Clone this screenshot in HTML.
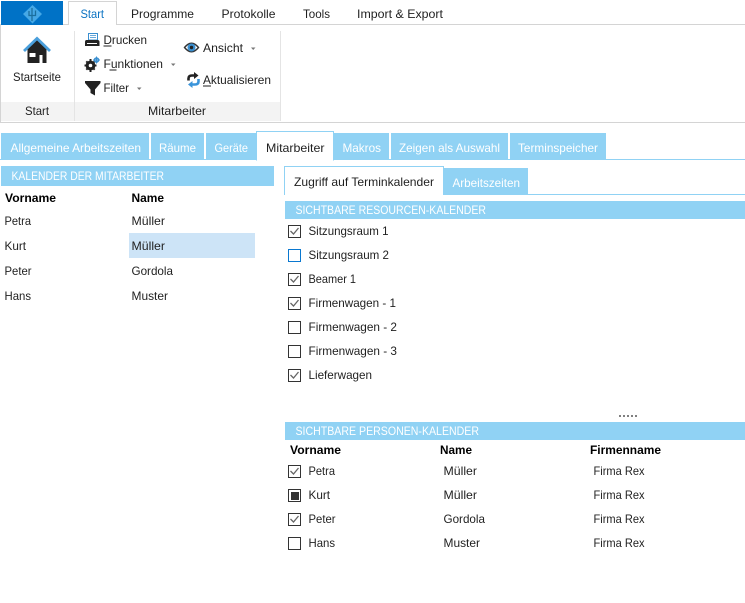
<!DOCTYPE html>
<html lang="de">
<head>
<meta charset="utf-8">
<title>Mitarbeiter</title>
<style>
html,body{margin:0;padding:0;background:#fff;width:745px;height:603px;overflow:hidden}
svg{display:block}
text{font-family:"Liberation Sans",sans-serif;font-size:12px;fill:#1f1f1f}
.b{font-weight:bold;fill:#000}
.w{fill:#fff}
.lb{fill:#90d2f4}
.cb{fill:#fff;stroke:#333;stroke-width:1}
.ck{fill:none;stroke:#666;stroke-width:1.3}
</style>
</head>
<body>
<svg width="745" height="603" viewBox="0 0 745 603" xmlns="http://www.w3.org/2000/svg">
<!-- Ribbon top -->
<rect x="0" y="24" width="745" height="1" fill="#d4d4d4"/>
<rect x="1" y="1" width="62" height="24" fill="#0072c6"/>
<path d="M32.500 5 L42 14 L32.500 23.500 L23 14Z" fill="#45a8e6"/>
<path d="M32 8V21M29 11V15.500H35.500V10.500" fill="none" stroke="#1b6f9e" stroke-width="1.300"/>
<path d="M68.500 25V1.500H116.500V25" fill="#fff" stroke="#d4d4d4"/>
<text lengthAdjust="spacingAndGlyphs" x="80.500" y="18" textLength="23.500" style="fill:#0a72c2">Start</text>
<text lengthAdjust="spacingAndGlyphs" x="131" y="18" textLength="63">Programme</text>
<text lengthAdjust="spacingAndGlyphs" x="221.500" y="18" textLength="54">Protokolle</text>
<text lengthAdjust="spacingAndGlyphs" x="303" y="18" textLength="27">Tools</text>
<text lengthAdjust="spacingAndGlyphs" x="357" y="18" textLength="86">Import &amp; Export</text>
<!-- Ribbon body -->
<rect x="0" y="25" width="1" height="98" fill="#d4d4d4"/>
<rect x="1" y="102" width="280" height="19" fill="#f3f3f3"/>
<rect x="74" y="31" width="1" height="90" fill="#e4e4e4"/>
<rect x="280" y="31" width="1" height="90" fill="#e4e4e4"/>
<rect x="0" y="122" width="745" height="1" fill="#d4d4d4"/>
<!-- House icon -->
<path d="M27.500 48V63H46.500V48L37 40Z" fill="#222"/>
<path d="M24 51L37 38.500L50 51" fill="none" stroke="#4a9fdc" stroke-width="2.800"/>
<rect x="29.500" y="53" width="6" height="4" fill="#fff"/>
<rect x="39.500" y="55" width="3" height="8" fill="#fff"/>
<text lengthAdjust="spacingAndGlyphs" x="13" y="81" textLength="48">Startseite</text>
<!-- Printer -->
<path d="M88.500 33.500H97.500V40H88.500Z" fill="#fff" stroke="#3a8fd0"/>
<path d="M90 35.500H96M90 37.500H96" stroke="#3a8fd0" stroke-width=".8"/>
<path d="M86.500 40H97.500Q99.500 40 99.500 42V46H85V42Q85 40 86.500 40Z" fill="#222"/>
<rect x="87" y="43" width="10" height="1" fill="#fff"/>
<text lengthAdjust="spacingAndGlyphs" x="103.500" y="44" textLength="43.500">Drucken</text>
<rect x="103.500" y="45.500" width="8" height="1" fill="#1f1f1f"/>
<!-- Gear -->
<circle cx="90.500" cy="65.500" r="3.500" fill="none" stroke="#222" stroke-width="2.800"/>
<path d="M90.500 59V72M84.500 65.500H96.500M86.300 61.300L94.700 69.700M94.700 61.300L86.300 69.700" stroke="#222" stroke-width="2"/>
<circle cx="90.500" cy="65.500" r="1.800" fill="#fff"/>
<circle cx="96.500" cy="60" r="2" fill="none" stroke="#3a8fd0" stroke-width="1.600"/>
<path d="M96.500 56.500V63.500M93 60H100" stroke="#3a8fd0" stroke-width="1"/>
<text lengthAdjust="spacingAndGlyphs" x="103.500" y="68" textLength="59.500">Funktionen</text>
<rect x="109.500" y="69.500" width="7" height="1" fill="#1f1f1f"/>
<path d="M171 63.500H175.500L173.200 66Z" fill="#777"/>
<!-- Funnel -->
<path d="M85 81H100.500V83L95 89.500V95.500L90.500 93V89.500L85 83Z" fill="#222"/>
<text lengthAdjust="spacingAndGlyphs" x="103.500" y="92" textLength="25.500">Filter</text>
<path d="M137 87.500H141.500L139.200 90Z" fill="#777"/>
<!-- Eye -->
<path d="M184.500 47.500Q191.500 39 198.500 47.500Q191.500 56 184.500 47.500Z" fill="#fff" stroke="#333" stroke-width="1.400"/>
<circle cx="191.500" cy="47.500" r="4" fill="#3a8fd0"/>
<circle cx="191.500" cy="47.500" r="1.700" fill="#222"/>
<text lengthAdjust="spacingAndGlyphs" x="203" y="52" textLength="40">Ansicht</text>
<path d="M251 47.500H255.500L253.200 50Z" fill="#777"/>
<!-- Refresh -->
<path d="M188.500 80.500V78.500Q188.500 75.500 192 75.500H195" fill="none" stroke="#222" stroke-width="2.600"/>
<path d="M194 72L198.500 75.500L194 79Z" fill="#222"/>
<path d="M198.500 79V81.500Q198.500 84.500 195 84.500H192" fill="none" stroke="#3a94da" stroke-width="2.600"/>
<path d="M192.500 81L188 84.500L192.500 88Z" fill="#3a94da"/>
<text lengthAdjust="spacingAndGlyphs" x="203" y="84" textLength="68">Aktualisieren</text>
<rect x="203" y="85.500" width="8" height="1" fill="#1f1f1f"/>
<text lengthAdjust="spacingAndGlyphs" x="25" y="115" textLength="24">Start</text>
<text lengthAdjust="spacingAndGlyphs" x="148" y="115" textLength="58">Mitarbeiter</text>
<!-- Main tabs -->
<rect x="0" y="159" width="745" height="1" class="lb"/>
<rect x="1" y="133" width="148" height="26" class="lb"/>
<rect x="151" y="133" width="53" height="26" class="lb"/>
<rect x="206" y="133" width="50" height="26" class="lb"/>
<path d="M256.500 160V131.500H333.500V160Z" fill="#fff" stroke="#90d2f4"/>
<rect x="257" y="159" width="76" height="2" fill="#fff"/>
<rect x="334" y="133" width="55" height="26" class="lb"/>
<rect x="391" y="133" width="117" height="26" class="lb"/>
<rect x="510" y="133" width="96" height="26" class="lb"/>
<text lengthAdjust="spacingAndGlyphs" class="w" x="10.500" y="152" textLength="130.500">Allgemeine Arbeitszeiten</text>
<text lengthAdjust="spacingAndGlyphs" class="w" x="159" y="152" textLength="37">Räume</text>
<text lengthAdjust="spacingAndGlyphs" class="w" x="214.500" y="152" textLength="33.500">Geräte</text>
<text lengthAdjust="spacingAndGlyphs" x="266" y="152" textLength="58.500">Mitarbeiter</text>
<text lengthAdjust="spacingAndGlyphs" class="w" x="342.500" y="152" textLength="38.500">Makros</text>
<text lengthAdjust="spacingAndGlyphs" class="w" x="399" y="152" textLength="101">Zeigen als Auswahl</text>
<text lengthAdjust="spacingAndGlyphs" class="w" x="518" y="152" textLength="80">Terminspeicher</text>
<!-- Left pane -->
<rect x="1" y="166" width="273" height="20" class="lb"/>
<text lengthAdjust="spacingAndGlyphs" class="w" x="11.500" y="180" textLength="152.500">KALENDER DER MITARBEITER</text>
<text lengthAdjust="spacingAndGlyphs" class="b" x="5" y="202" textLength="51">Vorname</text>
<text lengthAdjust="spacingAndGlyphs" class="b" x="131.500" y="202" textLength="32.500">Name</text>
<rect x="129" y="233" width="126" height="25" fill="#cde4f7"/>
<text lengthAdjust="spacingAndGlyphs" x="4.500" y="225" textLength="26.500">Petra</text>
<text lengthAdjust="spacingAndGlyphs" x="131.500" y="225" textLength="33.500">Müller</text>
<text lengthAdjust="spacingAndGlyphs" x="4.500" y="250" textLength="21.500">Kurt</text>
<text lengthAdjust="spacingAndGlyphs" x="131.500" y="250" textLength="33.500">Müller</text>
<text lengthAdjust="spacingAndGlyphs" x="4.500" y="275" textLength="27">Peter</text>
<text lengthAdjust="spacingAndGlyphs" x="131.500" y="275" textLength="41.500">Gordola</text>
<text lengthAdjust="spacingAndGlyphs" x="4.500" y="300" textLength="26.500">Hans</text>
<text lengthAdjust="spacingAndGlyphs" x="131.500" y="300" textLength="36.500">Muster</text>
<!-- Right subtabs -->
<rect x="284" y="194" width="461" height="1" class="lb"/>
<path d="M284.500 194.500V166.500H443.500V194.500" fill="#fff" stroke="#90d2f4"/>
<rect x="285" y="194" width="158" height="1" fill="#fff"/>
<rect x="444" y="168" width="84" height="26" class="lb"/>
<text lengthAdjust="spacingAndGlyphs" x="294" y="186" textLength="140">Zugriff auf Terminkalender</text>
<text lengthAdjust="spacingAndGlyphs" class="w" x="452.500" y="187" textLength="67.500">Arbeitszeiten</text>
<!-- Resources -->
<rect x="285" y="201" width="460" height="18" class="lb"/>
<text lengthAdjust="spacingAndGlyphs" class="w" x="295.500" y="214" textLength="190.500">SICHTBARE RESOURCEN-KALENDER</text>

<rect class="cb" x="288.500" y="225.500" width="12" height="12"/><path class="ck" d="M290.500 231L293.500 234L298.500 228"/>
<text lengthAdjust="spacingAndGlyphs" x="308.500" y="235" textLength="80">Sitzungsraum 1</text>
<rect class="cb" x="288.500" y="249.500" width="12" height="12" style="stroke:#0a78d0"/>
<text lengthAdjust="spacingAndGlyphs" x="308.500" y="259" textLength="80.500">Sitzungsraum 2</text>
<rect class="cb" x="288.500" y="273.500" width="12" height="12"/><path class="ck" d="M290.500 279L293.500 282L298.500 276"/>
<text lengthAdjust="spacingAndGlyphs" x="308.500" y="283" textLength="47.500">Beamer 1</text>
<rect class="cb" x="288.500" y="297.500" width="12" height="12"/><path class="ck" d="M290.500 303L293.500 306L298.500 300"/>
<text lengthAdjust="spacingAndGlyphs" x="308.500" y="307" textLength="87.500">Firmenwagen - 1</text>
<rect class="cb" x="288.500" y="321.500" width="12" height="12"/>
<text lengthAdjust="spacingAndGlyphs" x="308.500" y="331" textLength="88.500">Firmenwagen - 2</text>
<rect class="cb" x="288.500" y="345.500" width="12" height="12"/>
<text lengthAdjust="spacingAndGlyphs" x="308.500" y="355" textLength="88.500">Firmenwagen - 3</text>
<rect class="cb" x="288.500" y="369.500" width="12" height="12"/><path class="ck" d="M290.500 375L293.500 378L298.500 372"/>
<text lengthAdjust="spacingAndGlyphs" x="308.500" y="379" textLength="63.500">Lieferwagen</text>
<!-- Dots -->
<path d="M619 415h2v2h-2zM623 415h2v2h-2zM627 415h2v2h-2zM631 415h2v2h-2zM635 415h2v2h-2z" fill="#808080"/>
<!-- People -->
<rect x="285" y="422" width="460" height="18" class="lb"/>
<text lengthAdjust="spacingAndGlyphs" class="w" x="295.500" y="435" textLength="183.500">SICHTBARE PERSONEN-KALENDER</text>
<text lengthAdjust="spacingAndGlyphs" class="b" x="290" y="454" textLength="51">Vorname</text>
<text lengthAdjust="spacingAndGlyphs" class="b" x="440" y="454" textLength="32">Name</text>
<text lengthAdjust="spacingAndGlyphs" class="b" x="590" y="454" textLength="71">Firmenname</text>

<rect class="cb" x="288.500" y="465.500" width="12" height="12"/><path class="ck" d="M290.500 471L293.500 474L298.500 468"/>
<text lengthAdjust="spacingAndGlyphs" x="308.500" y="475" textLength="26.500">Petra</text>
<text lengthAdjust="spacingAndGlyphs" x="443.500" y="475" textLength="33.500">Müller</text>
<text lengthAdjust="spacingAndGlyphs" x="593.500" y="475" textLength="51">Firma Rex</text>
<rect class="cb" x="288.500" y="489.500" width="12" height="12"/><rect x="291" y="492" width="8" height="8" fill="#333"/>
<text lengthAdjust="spacingAndGlyphs" x="308.500" y="499" textLength="21.500">Kurt</text>
<text lengthAdjust="spacingAndGlyphs" x="443.500" y="499" textLength="33.500">Müller</text>
<text lengthAdjust="spacingAndGlyphs" x="593.500" y="499" textLength="51">Firma Rex</text>
<rect class="cb" x="288.500" y="513.500" width="12" height="12"/><path class="ck" d="M290.500 519L293.500 522L298.500 516"/>
<text lengthAdjust="spacingAndGlyphs" x="308.500" y="523" textLength="27">Peter</text>
<text lengthAdjust="spacingAndGlyphs" x="443.500" y="523" textLength="41.500">Gordola</text>
<text lengthAdjust="spacingAndGlyphs" x="593.500" y="523" textLength="51">Firma Rex</text>
<rect class="cb" x="288.500" y="537.500" width="12" height="12"/>
<text lengthAdjust="spacingAndGlyphs" x="308.500" y="547" textLength="26.500">Hans</text>
<text lengthAdjust="spacingAndGlyphs" x="443.500" y="547" textLength="36.500">Muster</text>
<text lengthAdjust="spacingAndGlyphs" x="593.500" y="547" textLength="51">Firma Rex</text>
</svg>
</body>
</html>
